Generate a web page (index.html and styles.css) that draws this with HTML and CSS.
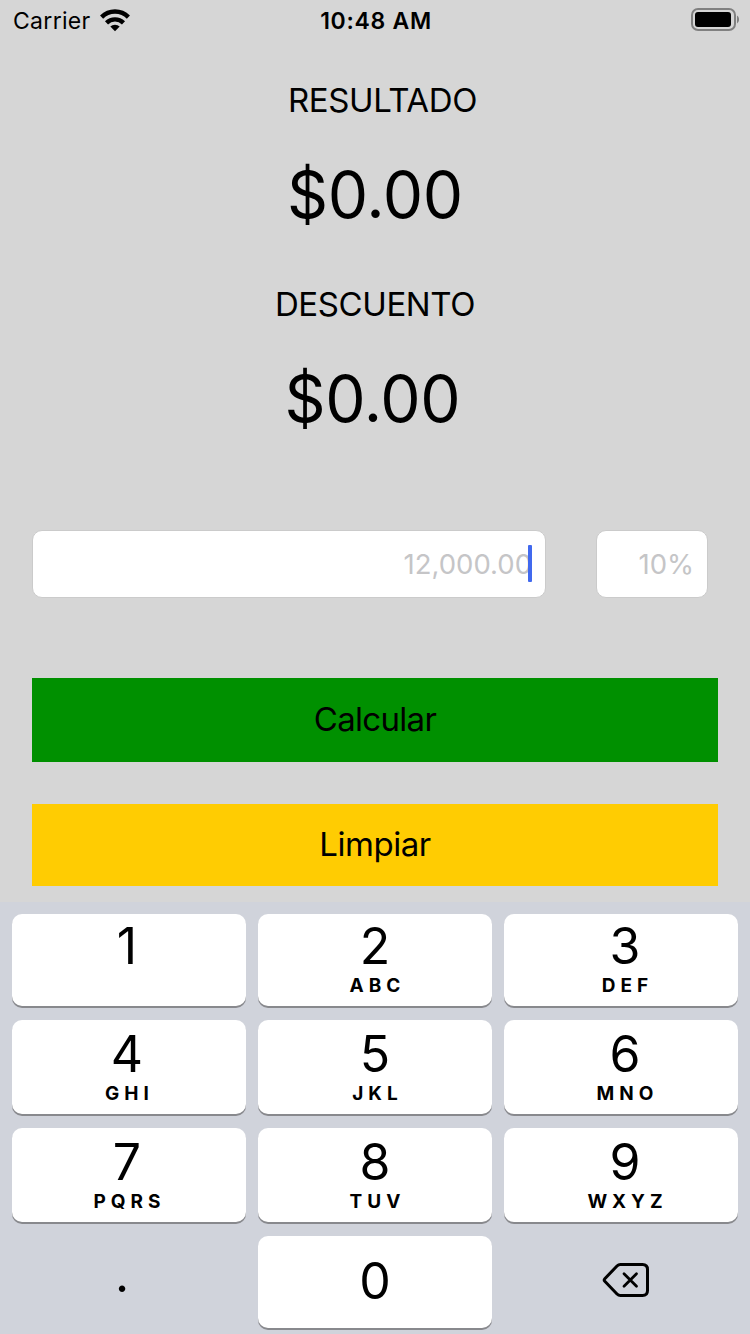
FILE: index.html
```html
<!DOCTYPE html>
<html lang="es">
<head>
<meta charset="utf-8">
<title>Descuento</title>
<link rel="stylesheet" href="styles.css">
</head>
<body>
<div class="screen">
  <header class="status">
    <div class="status-left">
      <span class="carrier">Carrier</span>
      <svg class="wifi" width="30" height="23" viewBox="0 0 30 23">
        <g fill="none" stroke="#000" stroke-width="4.400">
          <path d="M1.6 8.1A19 19 0 0 1 28.400 8.100"/>
          <path d="M6.500 13.800A12.200 12.200 0 0 1 23.500 13.800"/>
        </g>
        <path d="M15 22.200L10.300 17.600A6.600 6.600 0 0 1 19.700 17.600Z"/>
      </svg>
    </div>
    <span class="time">10:48 AM</span>
    <svg class="battery" width="48" height="24" viewBox="0 0 48 24">
      <rect x="1" y="1" width="43" height="21" rx="6" fill="none" stroke="#808080" stroke-width="2"/>
      <rect x="4" y="4" width="36" height="15" rx="3"/>
      <path d="M46 7.500Q48.200 8.800 48 11.500Q48.200 14.200 46 15.500Z" fill="#808080"/>
    </svg>
  </header>

  <main class="content">
    <h1 class="label label-result">RESULTADO</h1>
    <p class="amount amount-result">$0.00</p>
    <h2 class="label label-discount">DESCUENTO</h2>
    <p class="amount amount-discount">$0.00</p>
    <div class="fields">
      <div class="field field-price"><span class="placeholder">12,000.00</span><i class="caret"></i></div>
      <div class="field field-percent"><span class="placeholder">10%</span></div>
    </div>
    <button class="action calculate">Calcular</button>
    <button class="action clear">Limpiar</button>
  </main>

  <section class="keyboard">
    <div class="key left"><span class="digit">1</span></div>
    <div class="key"><span class="digit">2</span><span class="letters">ABC</span></div>
    <div class="key right"><span class="digit">3</span><span class="letters">DEF</span></div>
    <div class="key tall left"><span class="digit">4</span><span class="letters">GHI</span></div>
    <div class="key tall"><span class="digit">5</span><span class="letters">JKL</span></div>
    <div class="key tall right"><span class="digit">6</span><span class="letters">MNO</span></div>
    <div class="key tall left"><span class="digit">7</span><span class="letters">PQRS</span></div>
    <div class="key tall"><span class="digit">8</span><span class="letters">TUV</span></div>
    <div class="key tall right"><span class="digit">9</span><span class="letters">WXYZ</span></div>
    <div class="plain"><span class="point">.</span></div>
    <div class="key zero"><span class="digit">0</span></div>
    <div class="plain">
      <svg class="delete" width="48" height="36" viewBox="0 0 48 36" fill="none" stroke="#000" stroke-linecap="round" stroke-linejoin="round">
        <path stroke-width="3" d="M18.500 2.500H40.500Q45.500 2.500 45.500 7.500V28.500Q45.500 33.500 40.500 33.500H18.500Q16.500 33.500 15 32L2.800 19.300Q1.600 18 2.800 16.700L15 4Q16.500 2.500 18.500 2.500Z"/>
        <path stroke-width="2.800" d="M22 11.700L34.500 24.300M34.500 11.700L22 24.300"/>
      </svg>
    </div>
  </section>
</div>
</body>
</html>
```
FILE: styles.css
```css
* { box-sizing: border-box; }

body {
  margin: 0;
  font-family: Inter, "Liberation Sans", sans-serif;
  color: #000;
}

.screen {
  width: 750px;
  height: 1334px;
  overflow: hidden;
  display: flex;
  flex-direction: column;
  background: #d6d6d6;
}

.status {
  height: 41px;
  padding: 0 11px 0 13px;
  display: grid;
  grid-template-columns: 1fr auto 1fr;
  align-items: center;
}

.status-left { display: flex; align-items: center; gap: 9px; }
.carrier { padding-top: 2px; font-size: 23px; line-height: 39px; letter-spacing: 0.3px; }
.wifi { display: block; }
.time { padding-top: 2px; font-size: 23px; font-weight: 600; line-height: 39px; letter-spacing: 0.7px; }
.battery { justify-self: end; margin-bottom: 1px; }

.content {
  height: 861px;
  padding: 39px 32px 0;
  display: flex;
  flex-direction: column;
}

.label {
  margin: 0;
  height: 40px;
  font-size: 33px;
  font-weight: 400;
  line-height: 40px;
  text-align: center;
  letter-spacing: -0.4px;
}
.label-result { padding-left: 15px; }

.amount {
  margin: 35px 0 0;
  height: 80px;
  font-size: 64px;
  line-height: 80px;
  text-align: center;
  letter-spacing: -0.3px;
}
.label-discount { margin-top: 49px; }
.amount-discount { padding-right: 5px; }

.fields {
  margin-top: 91px;
  display: flex;
  gap: 50px;
}

.field {
  position: relative;
  height: 68px;
  border: 1px solid #cbcbcb;
  border-radius: 10px;
  background: #fff;
  text-align: right;
  line-height: 67px;
}
.field-price { width: 514px; padding-right: 13px; }
.field-percent { width: 112px; padding-right: 13px; }
.placeholder { font-size: 27.500px; color: #c5c5c7; }

.caret {
  position: absolute;
  top: 14px;
  right: 13px;
  width: 4px;
  height: 37px;
  border-radius: 1px;
  background: #4169ee;
}

.action {
  width: 686px;
  padding: 0 0 2px;
  border: 0;
  font: 400 33px/80px Inter, "Liberation Sans", sans-serif;
  letter-spacing: -0.7px;
  color: #000;
}
.calculate { height: 84px; margin-top: 80px; background: #009000; }
.clear { height: 82px; margin-top: 42px; background: #ffcc02; letter-spacing: -0.45px; }

.keyboard {
  height: 432px;
  padding: 12px 12px 0;
  display: grid;
  grid-template-columns: repeat(3, 234px);
  grid-template-rows: 92px 94px 94px 92px;
  gap: 14px 12px;
  background: #d0d3db;
}

.key {
  padding-top: 2px;
  display: flex;
  flex-direction: column;
  align-items: center;
  border-radius: 10px;
  background: #fff;
  box-shadow: 0 2px 0 #88898d;
}
.tall { padding-top: 4px; }
.zero { padding-top: 15px; }
.left { padding-right: 4px; }
.right { padding-left: 8px; }

.digit { height: 60px; font-size: 50px; line-height: 60px; }
.letters {
  margin-top: -2px;
  padding-left: 5px;
  height: 24px;
  font-size: 19px;
  font-weight: 700;
  line-height: 24px;
  letter-spacing: 5px;
}

.plain { display: flex; align-items: center; justify-content: center; }
.point { margin: -14px 14px 0 0; font-size: 49px; line-height: 60px; }
.delete { margin: -4px 0 0 10px; }
```
